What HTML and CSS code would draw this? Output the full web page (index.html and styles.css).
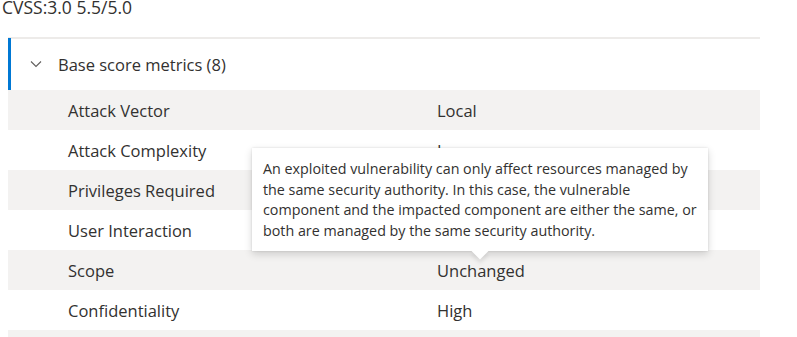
FILE: index.html
```html
<!DOCTYPE html>
<html>
<head>
  <link rel="stylesheet" href="styles.css">
</head>
<body>
  <div class="score">CVSS:3.0 5.5/5.0</div>

  <div class="metrics">
    <div class="metrics-header">
      <svg class="chevron" width="12" height="8" viewBox="0 0 12 8">
        <path d="M1 1.5 L6 6.5 L11 1.5" fill="none" stroke="#605e5c" stroke-width="1.1"/>
      </svg>
      <span>Base score metrics (8)</span>
    </div>
    <div class="row shaded"><span class="name">Attack Vector</span><span>Local</span></div>
    <div class="row"><span class="name">Attack Complexity</span><span>Low</span></div>
    <div class="row shaded"><span class="name">Privileges Required</span><span>Low</span></div>
    <div class="row"><span class="name">User Interaction</span><span>None</span></div>
    <div class="row shaded"><span class="name">Scope</span><span>Unchanged</span></div>
    <div class="row"><span class="name">Confidentiality</span><span>High</span></div>
    <div class="row shaded"><span class="name">Integrity</span><span>None</span></div>

    <div class="tooltip">
      An exploited vulnerability can only affect resources managed by<br>
      the same security authority. In this case, the vulnerable<br>
      component and the impacted component are either the same, or<br>
      both are managed by the same security authority.
    </div>
  </div>
</body>
</html>
```

FILE: styles.css
```css
body {
  margin: 0;
  font-family: "Open Sans", "Noto Sans", sans-serif;
  color: #323130;
  background-color: #fff;
  overflow: hidden;
}

.score {
  height: 18px;
  font-size: 17.5px;
  line-height: 18px;
  margin-top: -2px;
  padding-left: 2px;
  white-space: nowrap;
}

.metrics {
  position: relative;
  margin: 21px 0 0 8px;
  width: 752px;
  border-top: 2px solid #edebe9;
}

.metrics-header {
  display: flex;
  align-items: center;
  height: 52px;
  margin-top: -1px;
  border-left: 3px solid #0078d4;
  font-size: 16.5px;
}

.chevron {
  margin-left: 19px;
  margin-right: 16px;
}

.row {
  display: grid;
  grid-template-columns: 429px 1fr;
  align-items: center;
  height: 40px;
  font-size: 16.5px;
}

.row .name {
  padding-left: 60px;
}

.shaded {
  background-color: #f3f2f1;
}

.tooltip {
  position: absolute;
  left: 244px;
  top: 109px;
  width: 434px;
  padding: 11px 11px 10px 11px;
  background-color: #fff;
  font-size: 14.3px;
  line-height: 20.5px;
  white-space: nowrap;
  box-shadow: 0 3px 8px rgba(0, 0, 0, 0.16), 0 0 2px rgba(0, 0, 0, 0.12);
}

.tooltip::after {
  content: "";
  position: absolute;
  left: 222px;
  bottom: -6px;
  width: 12px;
  height: 12px;
  background-color: #fff;
  transform: rotate(45deg);
  box-shadow: 3px 3px 4px rgba(0, 0, 0, 0.08);
}
```
